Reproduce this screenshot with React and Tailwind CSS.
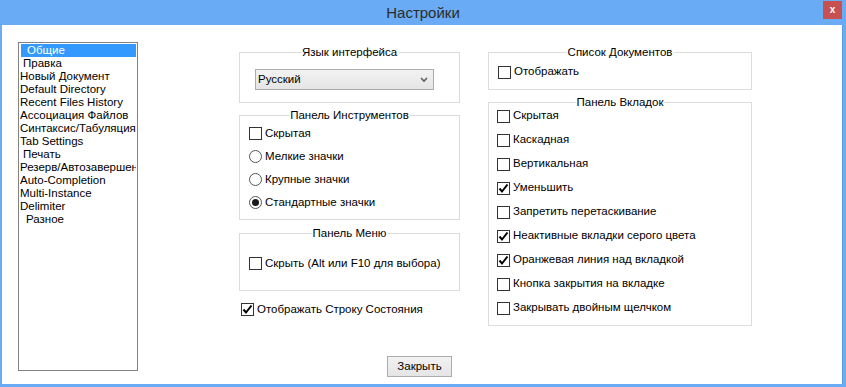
import React from 'react';

const font = { fontFamily: '"Liberation Sans", Arial, sans-serif' };

const listItems = [
  { label: 'Общие', indent: 'pl-[6px]', selected: true },
  { label: 'Правка', indent: 'pl-[3px]' },
  { label: 'Новый Документ', indent: 'pl-0' },
  { label: 'Default Directory', indent: 'pl-0' },
  { label: 'Recent Files History', indent: 'pl-0' },
  { label: 'Ассоциация Файлов', indent: 'pl-0' },
  { label: 'Синтаксис/Табуляция', indent: 'pl-0' },
  { label: 'Tab Settings', indent: 'pl-0' },
  { label: 'Печать', indent: 'pl-[3px]' },
  { label: 'Резерв/Автозавершение', indent: 'pl-0' },
  { label: 'Auto-Completion', indent: 'pl-0' },
  { label: 'Multi-Instance', indent: 'pl-0' },
  { label: 'Delimiter', indent: 'pl-0' },
  { label: 'Разное', indent: 'pl-[6px]' },
];

const tabOptions = [
  { label: 'Скрытая', checked: false },
  { label: 'Каскадная', checked: false },
  { label: 'Вертикальная', checked: false },
  { label: 'Уменьшить', checked: true },
  { label: 'Запретить перетаскивание', checked: false },
  { label: 'Неактивные вкладки серого цвета', checked: true },
  { label: 'Оранжевая линия над вкладкой', checked: true },
  { label: 'Кнопка закрытия на вкладке', checked: false },
  { label: 'Закрывать двойным щелчком', checked: false },
];

const Checkbox = ({ checked }) => (
  <span className="w-[13px] h-[13px] border border-[#333333] bg-white flex items-center justify-center shrink-0">
    {checked && (
      <svg width="11" height="11" viewBox="0 0 11 11">
        <path d="M1.5 5.5 L4 8.5 L9.5 1.5" fill="none" stroke="#000" strokeWidth="2" />
      </svg>
    )}
  </span>
);

const Radio = ({ checked }) => (
  <span className="w-[13px] h-[13px] rounded-full border border-[#555555] bg-white flex items-center justify-center shrink-0">
    {checked && <span className="w-[7px] h-[7px] rounded-full bg-[#1a1a1a]" />}
  </span>
);

const Row = ({ children, label, height = 'h-[23px]' }) => (
  <div className={`flex items-center gap-[3px] ${height}`}>
    {children}
    <span className="text-[11.5px] text-black leading-none whitespace-nowrap">{label}</span>
  </div>
);

const GroupBox = ({ title, className, children }) => (
  <div className={`relative border border-[#dcdcdc] ${className}`}>
    <span className="absolute top-[-8px] left-1/2 -translate-x-1/2 bg-white px-[1px] text-[11.5px] leading-[15px] text-black whitespace-nowrap">
      {title}
    </span>
    {children}
  </div>
);

const App = () => {
  return (
    <div
      style={font}
      className="w-[846px] h-[387px] bg-[#6aabf5] flex flex-col overflow-hidden"
    >
      {/* Title bar */}
      <div className="relative h-[25px] flex items-center justify-center shrink-0">
        <span className="text-[15px] text-[#2b2b2b] pt-[1px]">Настройки</span>
        <button className="absolute right-[4px] top-[1px] w-[19px] h-[18px] bg-[#c75050] flex items-center justify-center">
          <span className="text-white text-[10px] font-bold leading-none">x</span>
        </button>
      </div>

      {/* Client area */}
      <div className="flex-1 ml-[2px] mr-[3px] mb-[3px] bg-white flex border-r border-[#5b9be6]">
        {/* Category list */}
        <div className="ml-[16px] mt-[17px] w-[120px] h-[329px] border border-[#828282] p-[1px] shrink-0 overflow-hidden">
          {listItems.map((item) => (
            <div
              key={item.label}
              className={`h-[13px] text-[11.5px] leading-[13px] whitespace-nowrap overflow-hidden ${
                item.selected ? 'bg-[#3399ff] text-white ml-[1px]' : 'text-black'
              } ${item.indent}`}
            >
              {item.label}
            </div>
          ))}
        </div>

        {/* Right side */}
        <div className="flex flex-col">
          <div className="flex items-start">
            {/* Middle column */}
            <div className="ml-[101px] mt-[27px] w-[221px] flex flex-col">
              <GroupBox title="Язык интерфейса" className="h-[51px]">
                <div className="ml-[15px] mt-[16px] w-[179px] h-[21px] border border-[#acacac] bg-gradient-to-b from-[#f2f2f2] to-[#e5e5e5] flex items-center justify-between pl-[2px] pr-[5px]">
                  <span className="text-[11.5px] text-black leading-none">Русский</span>
                  <svg width="8" height="6" viewBox="0 0 8 6">
                    <path d="M1 1 L4 4 L7 1" fill="none" stroke="#606060" strokeWidth="1.6" />
                  </svg>
                </div>
              </GroupBox>

              <GroupBox title="Панель Инструментов" className="h-[105px] mt-[12px] pt-[6px] pl-[9px]">
                <Row label="Скрытая"><Checkbox /></Row>
                <Row label="Мелкие значки"><Radio /></Row>
                <Row label="Крупные значки"><Radio /></Row>
                <Row label="Стандартные значки"><Radio checked /></Row>
              </GroupBox>

              <GroupBox title="Панель Меню" className="h-[58px] mt-[13px] pt-[18px] pl-[9px]">
                <Row label="Скрыть (Alt или F10 для выбора)"><Checkbox /></Row>
              </GroupBox>

              <div className="mt-[7px] pl-[2px]">
                <Row label="Отображать Строку Состояния"><Checkbox checked /></Row>
              </div>
            </div>

            {/* Right column */}
            <div className="ml-[28px] mt-[27px] w-[264px] flex flex-col">
              <GroupBox title="Список Документов" className="h-[38px] pt-[8px] pl-[9px]">
                <Row label="Отображать" height="h-[22px]"><Checkbox /></Row>
              </GroupBox>

              <GroupBox title="Панель Вкладок" className="h-[224px] mt-[12px] pt-[1px] pl-[8px]">
                {tabOptions.map((opt) => (
                  <Row key={opt.label} label={opt.label} height="h-[24px]">
                    <Checkbox checked={opt.checked} />
                  </Row>
                ))}
              </GroupBox>
            </div>
          </div>

          <div className="mt-[27px] ml-[249px]">
            <button className="w-[65px] h-[21px] border border-[#acacac] bg-gradient-to-b from-[#f2f2f2] to-[#e5e5e5] text-[11.5px] text-black leading-none">
              Закрыть
            </button>
          </div>
        </div>
      </div>
    </div>
  );
};

export default App;
